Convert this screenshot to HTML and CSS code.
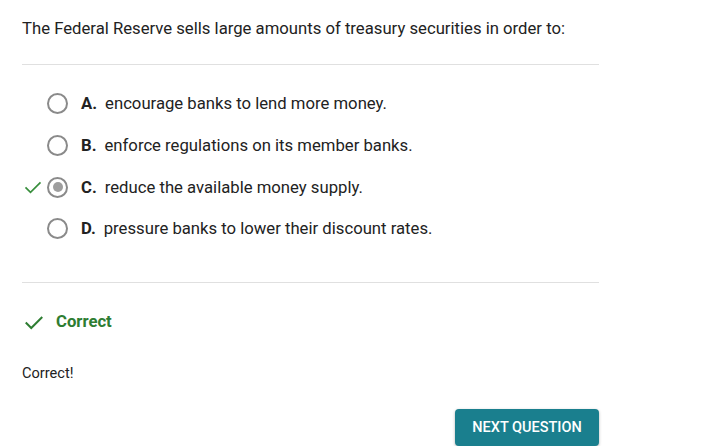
FILE: index.html
```html
<!DOCTYPE html>
<html lang="en">
<head>
  <meta charset="UTF-8" />
  <title>Question</title>
  <link rel="stylesheet" href="styles.css">
</head>
<body>
  <div class="quiz">
    <p class="question">The Federal Reserve sells large amounts of treasury securities in order to:</p>

    <ul class="options">
      <li class="option">
        <span class="mark"></span>
        <span class="radio"></span>
        <span class="letter">A.</span>
        <span class="text">encourage banks to lend more money.</span>
      </li>
      <li class="option">
        <span class="mark"></span>
        <span class="radio"></span>
        <span class="letter">B.</span>
        <span class="text">enforce regulations on its member banks.</span>
      </li>
      <li class="option">
        <span class="mark">
          <svg width="20" height="20" viewBox="0 0 24 24"><path d="M3 12.5l6 6L21 6.5" fill="none" stroke="#388e3c" stroke-width="2"/></svg>
        </span>
        <span class="radio checked"></span>
        <span class="letter">C.</span>
        <span class="text">reduce the available money supply.</span>
      </li>
      <li class="option">
        <span class="mark"></span>
        <span class="radio"></span>
        <span class="letter">D.</span>
        <span class="text">pressure banks to lower their discount rates.</span>
      </li>
    </ul>

    <div class="result">
      <svg width="22" height="22" viewBox="0 0 24 24"><path d="M3 12.5l6 6L21 6.5" fill="none" stroke="#2e7d32" stroke-width="2.2"/></svg>
      <span>Correct</span>
    </div>

    <p class="feedback">Correct!</p>

    <div class="actions">
      <button>NEXT QUESTION</button>
    </div>
  </div>
</body>
</html>
```

FILE: styles.css
```css
body {
  margin: 0;
  font-family: Roboto, 'Liberation Sans', sans-serif;
  color: #222;
  background: white;
}

.quiz {
  width: 577px;
  margin-left: 22px;
}

.question {
  margin: 0;
  padding: 19px 0 25px;
  font-size: 16.7px;
  line-height: 20px;
  border-bottom: 1px solid #e0e0e0;
}

.options {
  list-style: none;
  margin: 0;
  padding: 18px 0 32px;
  border-bottom: 1px solid #e0e0e0;
}

.option {
  display: flex;
  align-items: center;
  height: 41.7px;
  font-size: 16.7px;
}

.mark {
  width: 24px;
  height: 20px;
  margin-left: 1px;
}

.radio {
  box-sizing: border-box;
  width: 21px;
  height: 21px;
  border: 2px solid #8a8a8a;
  border-radius: 50%;
  margin-right: 13px;
  position: relative;
}

.radio.checked::after {
  content: '';
  position: absolute;
  left: 3.5px;
  top: 3.5px;
  width: 10px;
  height: 10px;
  border-radius: 50%;
  background: #9e9e9e;
}

.letter {
  font-weight: bold;
  margin-right: 8px;
}

.result {
  display: flex;
  align-items: center;
  gap: 11px;
  margin-top: 28px;
  margin-left: 1px;
  font-size: 16.7px;
  font-weight: bold;
  color: #2e7d32;
}

.feedback {
  margin: 30px 0 0;
  font-size: 14.6px;
  line-height: 20px;
}

.actions {
  display: flex;
  justify-content: flex-end;
  margin-top: 26px;
}

button {
  background: #1a7f8e;
  color: white;
  border: none;
  border-radius: 4px;
  font-family: Roboto, sans-serif;
  font-size: 14.5px;
  font-weight: 500;
  width: 144px;
  height: 37px;
  box-shadow: 0 1px 3px rgba(0,0,0,0.3);
}
```
